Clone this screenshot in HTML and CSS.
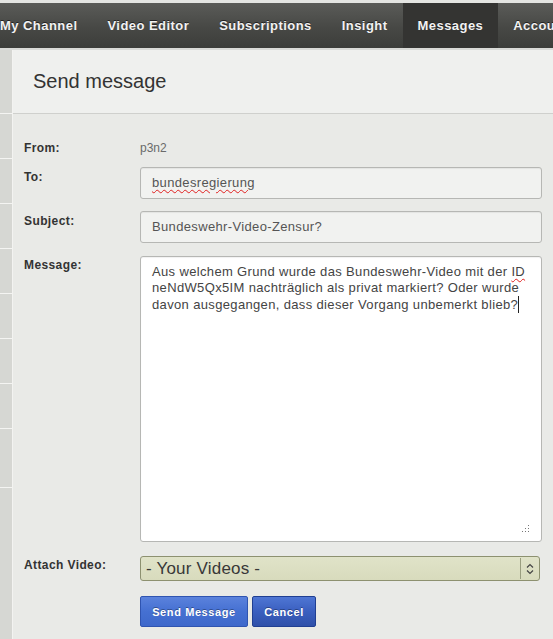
FILE: index.html
```html
<!DOCTYPE html>
<html lang="de">
<head>
<meta charset="utf-8">
<title>Send message</title>
<link rel="stylesheet" href="styles.css">
</head>
<body>
<div class="topstrip"></div>
<nav class="nav">
  <a class="nav-item">My Channel</a>
  <a class="nav-item">Video Editor</a>
  <a class="nav-item">Subscriptions</a>
  <a class="nav-item">Insight</a>
  <a class="nav-item active">Messages</a>
  <a class="nav-item">Account</a>
</nav>
<div class="navline"></div>
<div class="main">
  <aside class="side">
    <div class="sb sb-first"></div>
    <div class="sb"></div>
    <div class="sb"></div>
    <div class="sb"></div>
    <div class="sb"></div>
    <div class="sb"></div>
    <div class="sb"></div>
    <div class="sb"></div>
    <div class="sb sb-tall"></div>
    <div class="sb sb-rest"></div>
  </aside>
  <section class="content">
    <header class="head"><h1 class="title">Send message</h1></header>
    <form class="form">
      <div class="row row-from">
        <div class="label">From:</div>
        <div class="value">p3n2</div>
      </div>
      <div class="row row-to">
        <div class="label">To:</div>
        <div class="field"><span class="spell">bundesregierung</span></div>
      </div>
      <div class="row row-subject">
        <div class="label">Subject:</div>
        <div class="field">Bundeswehr-Video-Zensur?</div>
      </div>
      <div class="row row-message">
        <div class="label label-msg">Message:</div>
        <div class="field textarea">Aus welchem Grund wurde das Bundeswehr-Video mit der <span class="spell">ID</span><br>neNdW5Qx5IM nachträglich als privat markiert? Oder wurde<br>davon ausgegangen, dass dieser Vorgang unbemerkt blieb?<span class="caret"></span>
          <svg class="grip" width="9" height="9" viewBox="0 0 9 9"><g fill="#777"><rect x="7" y="0" width="1" height="1"/><rect x="4" y="3" width="1" height="1"/><rect x="7" y="3" width="1" height="1"/><rect x="1" y="6" width="1" height="1"/><rect x="4" y="6" width="1" height="1"/><rect x="7" y="6" width="1" height="1"/></g></svg>
        </div>
      </div>
      <div class="row row-attach">
        <div class="label label-attach">Attach Video:</div>
        <div class="select">
          <span class="select-text">- Your Videos -</span>
          <span class="select-arrow">
            <svg width="10" height="14" viewBox="0 0 10 14"><path d="M2 5.5 L5 2.5 L8 5.5 M2 8.5 L5 11.5 L8 8.5" fill="none" stroke="#444" stroke-width="1.2"/></svg>
          </span>
        </div>
      </div>
      <div class="row row-buttons">
        <div class="label"></div>
        <div class="buttons">
          <button type="button" class="btn btn-send">Send Message</button>
          <button type="button" class="btn btn-cancel">Cancel</button>
        </div>
      </div>
    </form>
  </section>
</div>
</body>
</html>
```
FILE: styles.css
```css
html, body {
  margin: 0;
  padding: 0;
}
body {
  width: 553px;
  height: 639px;
  overflow: hidden;
  background: #e8e9e6;
  font-family: "Liberation Sans", Arial, sans-serif;
  color: #333;
}
.topstrip {
  height: 3px;
  background: #e4e5e2;
}
.nav {
  height: 45px;
  display: flex;
  margin-left: -15px;
  background: linear-gradient(#5a5b58, #474845 55%, #3c3d3a);
  white-space: nowrap;
  overflow: hidden;
}
.nav-item {
  display: block;
  padding: 0 15px;
  line-height: 45px;
  color: #f2f2f2;
  font-weight: bold;
  font-size: 13px;
  letter-spacing: 0.45px;
  text-shadow: 0 -1px 0 #222;
  flex-shrink: 0;
}
.nav-item.active {
  background: #343432;
}
.navline {
  height: 2px;
  background: #d9dad7;
}
.main {
  display: flex;
  height: 589px;
}
.side {
  width: 12px;
  flex-shrink: 0;
  display: flex;
  flex-direction: column;
  border-right: 1px solid #f3f3f1;
}
.sb {
  height: 44px;
  background: #d6d7d3;
  border-bottom: 1px solid #f4f4f2;
}
.sb-first {
  height: 63px;
}
.sb-tall {
  height: 58px;
}
.sb-rest {
  flex: 1;
  border-bottom: none;
}
.content {
  flex: 1;
  background: #e9eae7;
}
.head {
  height: 63px;
  background: #eff0ee;
  border-bottom: 1px solid #cfd0cd;
  display: flex;
  align-items: center;
  padding-left: 20px;
}
.title {
  margin: 0;
  font-size: 20px;
  font-weight: normal;
  color: #333;
}
.form {
  padding: 24px 11px 0 11px;
}
.row {
  display: flex;
  align-items: flex-start;
}
.label {
  width: 116px;
  flex-shrink: 0;
  font-size: 12px;
  font-weight: bold;
  line-height: 14px;
  padding-top: 3px;
  color: #333;
  letter-spacing: 0.4px;
}
.row-from {
  height: 20px;
  margin-bottom: 9px;
}
.value {
  font-size: 12px;
  line-height: 20px;
  color: #6a6a6a;
}
.field {
  height: 30px;
  box-sizing: content-box;
  border: 1px solid #b6b7b4;
  border-radius: 3px;
  background: #f1f2f0;
  box-shadow: inset 0 1px 1px rgba(0,0,0,0.06);
  padding: 0 0 0 11px;
  width: 389px;
  font-size: 13px;
  letter-spacing: 0.35px;
  line-height: 30px;
  color: #555;
}
.row-to {
  margin-bottom: 12px;
}
.row-subject {
  margin-bottom: 13px;
}
.spell {
  text-decoration: underline wavy #e02020;
  text-decoration-thickness: 1px;
  text-underline-offset: 2px;
}
.textarea {
  position: relative;
  height: 277px;
  padding-top: 7px;
  background: #ffffff;
  line-height: 16px;
  color: #444;
  white-space: nowrap;
}
.label-msg {
  padding-top: 2px;
}
.caret {
  display: inline-block;
  width: 1px;
  height: 17px;
  background: #222;
  vertical-align: -4px;
}
.grip {
  position: absolute;
  right: 11px;
  bottom: 7px;
}
.row-message {
  margin-bottom: 14px;
}
.select {
  width: 398px;
  height: 23px;
  border: 1px solid #8d9170;
  border-radius: 3px;
  background: linear-gradient(#e0e3c8, #d8dbbd);
  display: flex;
  align-items: center;
  justify-content: space-between;
}
.select-text {
  padding-left: 5px;
  font-size: 17px;
  letter-spacing: 0.2px;
  color: #383838;
  line-height: 23px;
}
.select-arrow {
  width: 18px;
  height: 21px;
  border-left: 1px solid #9a9e80;
  display: flex;
  align-items: center;
  justify-content: center;
}
.label-attach {
  padding-top: 2px;
}
.row-attach {
  margin-bottom: 15px;
}
.buttons {
  display: flex;
  gap: 4px;
}
.btn {
  height: 31px;
  margin: 0;
  padding: 0;
  border-radius: 2px;
  font-family: "Liberation Sans", Arial, sans-serif;
  font-weight: bold;
  font-size: 11px;
  letter-spacing: 0.6px;
  color: #fff;
  text-shadow: 0 -1px 0 rgba(0,0,0,0.35);
  cursor: pointer;
}
.btn-send {
  width: 108px;
  border: 1px solid #2f54b0;
  background: linear-gradient(#5b82dc, #4570d2 50%, #3e68cb);
}
.btn-cancel {
  width: 64px;
  border: 1px solid #203f92;
  background: linear-gradient(#4f76d4, #3a5fbf 50%, #2f50a9);
}
```
